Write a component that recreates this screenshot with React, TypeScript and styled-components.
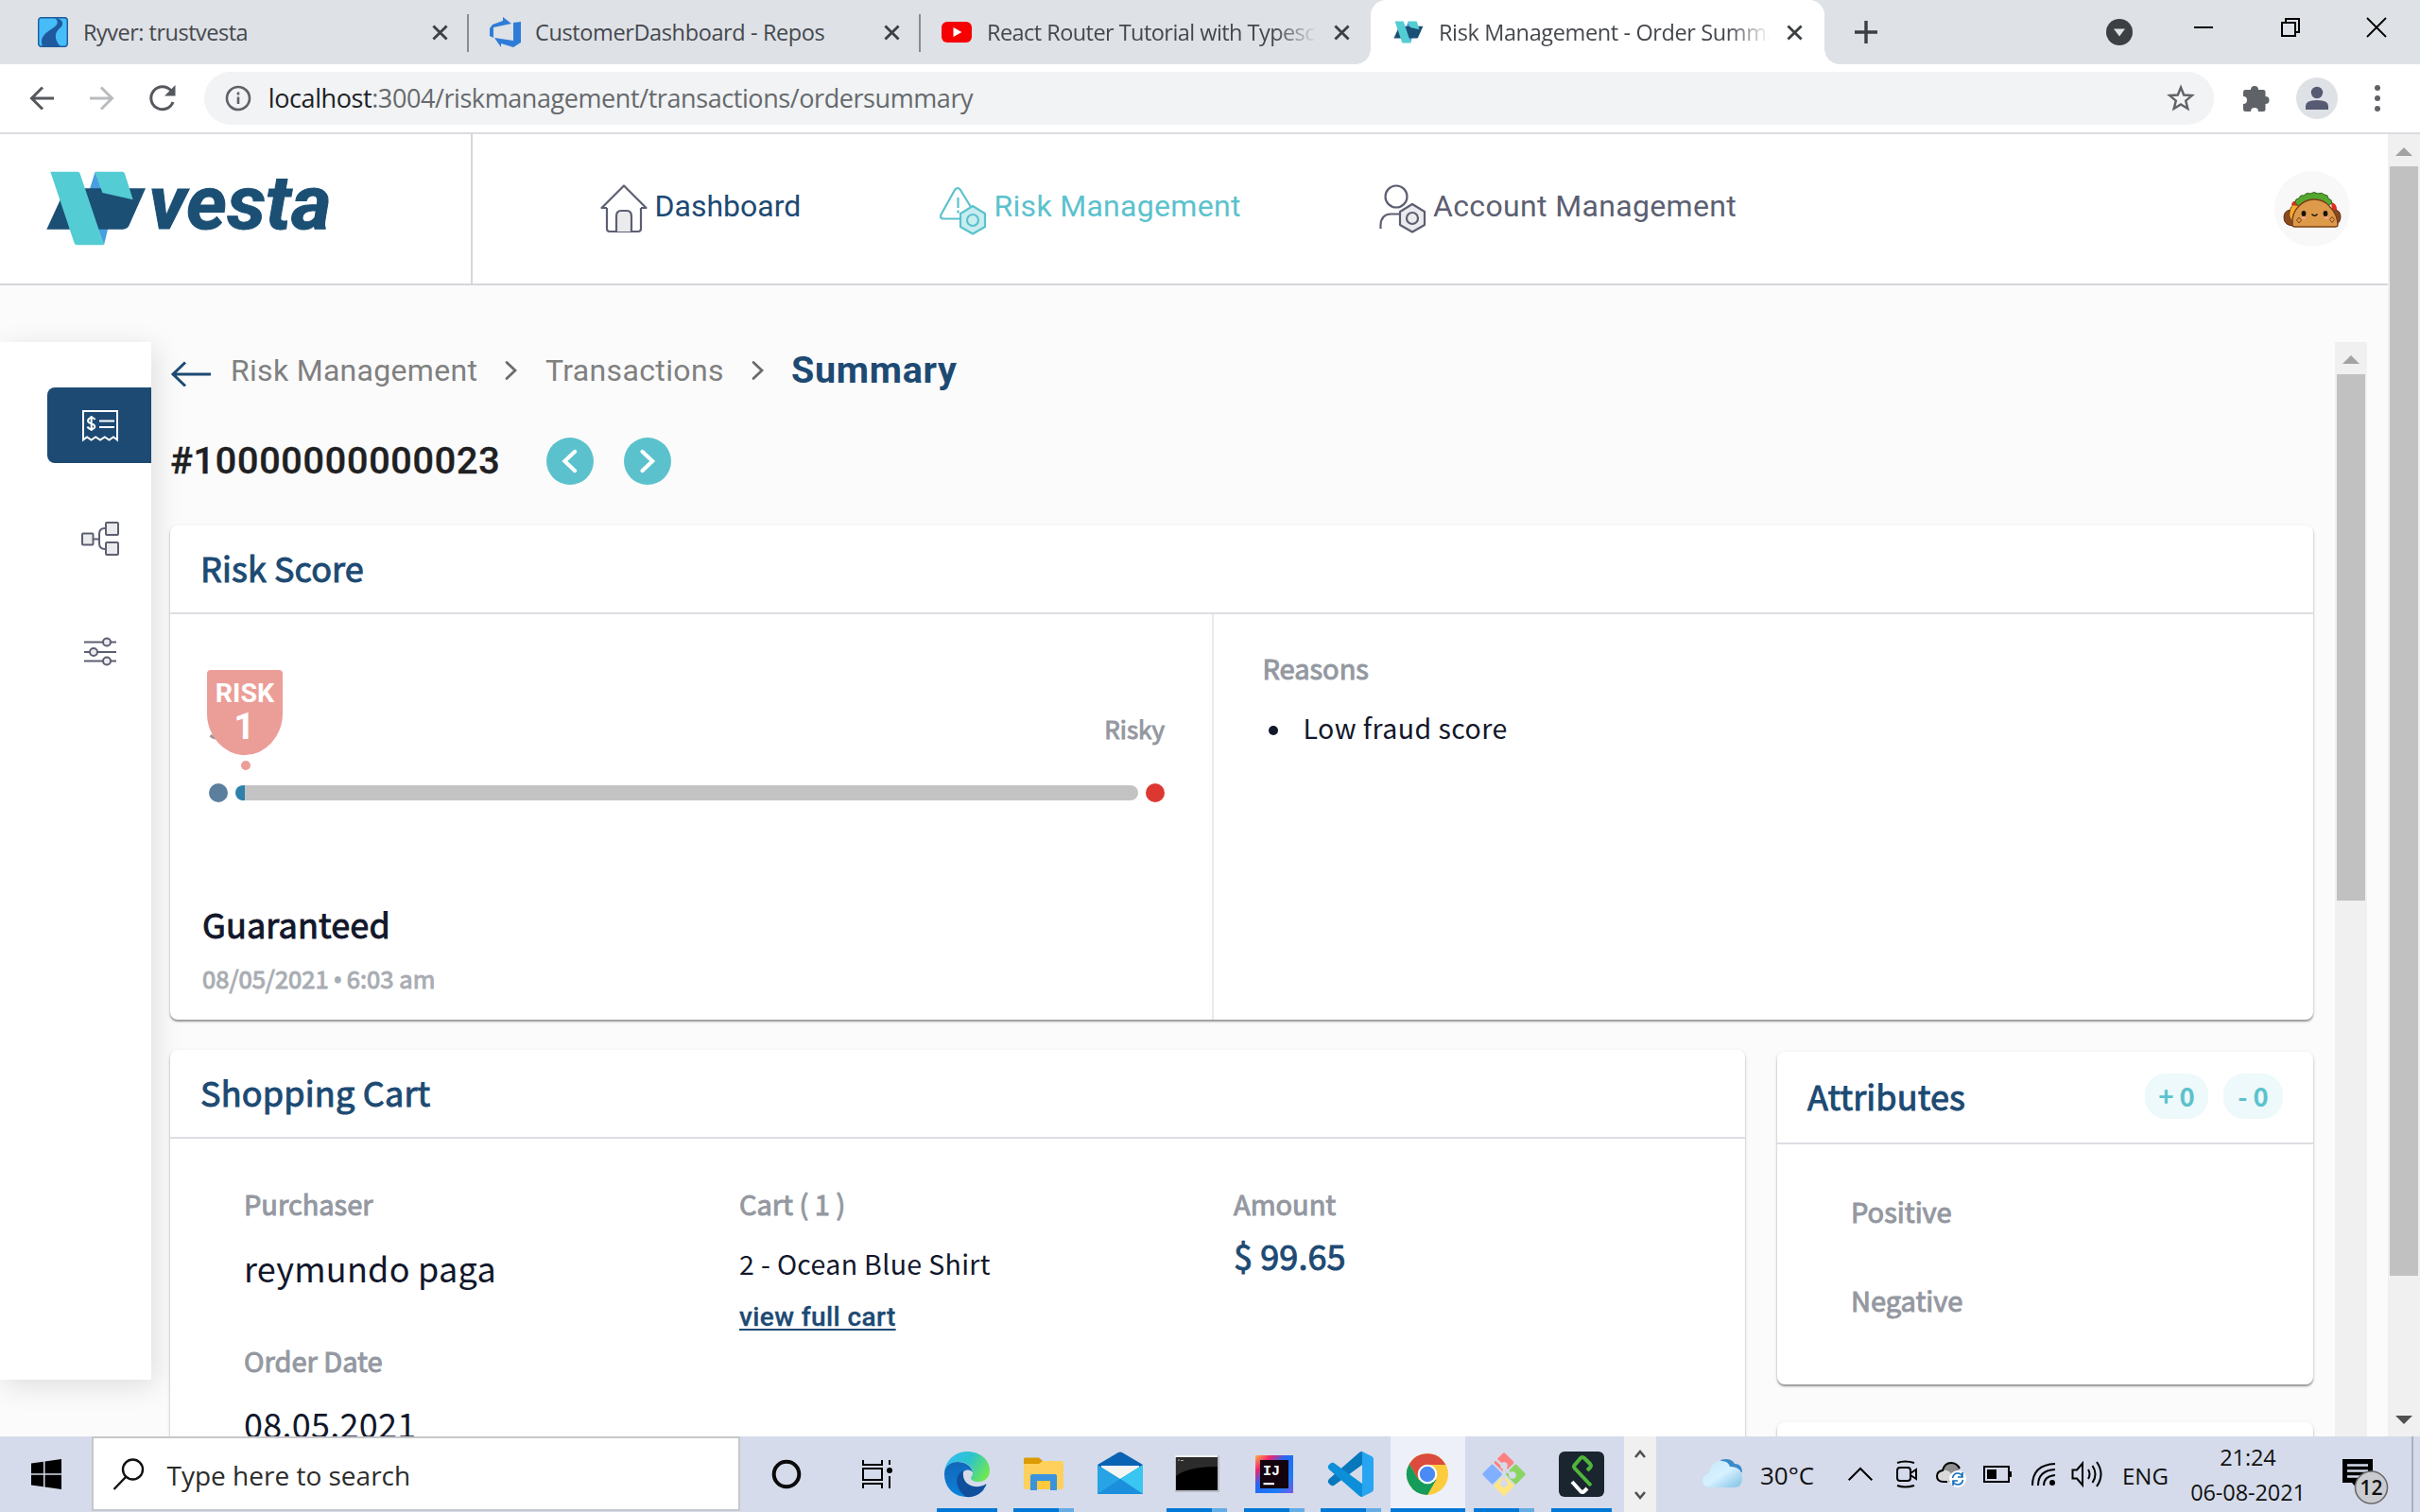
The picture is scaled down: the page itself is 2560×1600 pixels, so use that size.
import React from "react";
import styled, { createGlobalStyle, css } from "styled-components";

const ui = `"Open Sans", "Noto Sans", sans-serif`;
const roboto = `Roboto, sans-serif`;
const source = `"Noto Sans CJK SC", "Noto Sans", sans-serif`;

const navy = "#1d4a73";
const teal = "#5bc2cd";
const slate = "#5c5f72";
const muted = "#9498a1";

const GlobalStyle = createGlobalStyle`
  * { box-sizing: border-box; }
  body { margin: 0; background: #fbfbfb; }
  svg { display: block; flex: none; overflow: visible; }
`;

const Screen = styled.div`
  width: 2560px;
  height: 1600px;
  display: flex;
  flex-direction: column;
  overflow: hidden;
  background: #fbfbfb;
  white-space: nowrap;
`;

/* ---------- browser chrome ---------- */

const TabStrip = styled.div`
  height: 68px;
  flex: none;
  display: flex;
  align-items: stretch;
  padding-left: 18px;
  background: #dee1e6;
  font-family: ${ui};
`;

const Tab = styled.div<{ $w: number; $active?: boolean; $sep?: boolean }>`
  position: relative;
  width: ${(p) => p.$w}px;
  display: flex;
  align-items: center;
  padding: 0 ${(p) => (p.$active ? 23 : 22)}px 0 ${(p) => (p.$active ? 24 : 22)}px;
  ${(p) =>
    p.$sep &&
    css`
      &::after {
        content: "";
        position: absolute;
        right: 0;
        top: 15px;
        width: 2px;
        height: 40px;
        background: #888b90;
      }
    `}
  ${(p) =>
    p.$active &&
    css`
      background: #fff;
      border-radius: 16px 16px 0 0;
      &::before,
      &::after {
        content: "";
        position: absolute;
        bottom: 0;
        width: 16px;
        height: 16px;
      }
      &::before {
        left: -16px;
        background: radial-gradient(circle at 0 0, transparent 15.5px, #fff 16px);
      }
      &::after {
        right: -16px;
        background: radial-gradient(circle at 100% 0, transparent 15.5px, #fff 16px);
      }
    `}
`;

const Favicon = styled.span`
  width: 32px;
  display: flex;
  justify-content: center;
`;

const TabTitle = styled.span<{ $fade?: boolean; $ls: number }>`
  flex: 1;
  min-width: 0;
  margin: 0 18px 0 16px;
  overflow: hidden;
  font-size: 23.5px;
  line-height: 34px;
  color: #45484d;
  letter-spacing: ${(p) => p.$ls}px;
  ${(p) => p.$fade && css`mask-image: linear-gradient(90deg, #000 calc(100% - 44px), transparent);`}
`;

const WindowControls = styled.div`
  margin-left: auto;
  display: flex;
  align-items: center;
`;

const ControlCell = styled.div<{ $w: number; $up?: number }>`
  width: ${(p) => p.$w}px;
  height: 68px;
  display: flex;
  align-items: center;
  justify-content: center;
  padding-bottom: ${(p) => p.$up ?? 0}px;
`;

const NewTab = styled.div`
  width: 88px;
  display: flex;
  align-items: center;
  justify-content: center;
`;

const Toolbar = styled.div`
  height: 74px;
  flex: none;
  display: flex;
  align-items: center;
  background: #fff;
  border-bottom: 2px solid #dadce2;
  padding-left: 12px;
`;

const ToolCell = styled.div<{ $w: number }>`
  width: ${(p) => p.$w}px;
  display: flex;
  justify-content: center;
`;

const AddressBar = styled.div`
  width: 2128px;
  height: 56px;
  margin-left: 12px;
  border-radius: 28px;
  background: #f1f3f4;
  display: flex;
  align-items: center;
  padding: 0 20px 0 22px;
`;

const Url = styled.span`
  flex: 1;
  margin-left: 18px;
  font: 27px/40px ${ui};
  letter-spacing: -0.42px;
  color: #66696d;
  b {
    font-weight: 400;
    color: #202124;
  }
`;

const ProfileDot = styled.div`
  width: 44px;
  height: 44px;
  flex: none;
  border-radius: 50%;
  background: #dee1e6;
  display: flex;
  align-items: center;
  justify-content: center;
`;

/* ---------- page shell ---------- */

const Viewport = styled.div`
  height: 1378px;
  flex: none;
  display: flex;
`;

const Page = styled.div`
  flex: 1;
  min-width: 0;
  display: flex;
  flex-direction: column;
  overflow: hidden;
`;

const Scrollbar = styled.div`
  width: 34px;
  flex: none;
  background: #f0f0f0;
  display: flex;
  flex-direction: column;
  align-items: center;
  padding-top: 14px;
`;

const InnerScrollbar = styled(Scrollbar)`
  height: 1158px;
`;

const Thumb = styled.div<{ $h: number }>`
  width: 30px;
  height: ${(p) => p.$h}px;
  background: #c1c1c1;
`;

const Triangle = styled.div<{ $down?: boolean }>`
  width: 0;
  height: 0;
  border-left: 9px solid transparent;
  border-right: 9px solid transparent;
  ${(p) =>
    p.$down
      ? css`
          border-top: 9px solid #505050;
          margin-top: auto;
          margin-bottom: 13px;
        `
      : css`
          border-bottom: 9px solid #a3a3a3;
          margin-bottom: 11px;
        `}
`;

const Header = styled.header`
  height: 160px;
  flex: none;
  display: flex;
  background: #fff;
  border-bottom: 2px solid #d5d6db;
`;

const LogoArea = styled.div`
  width: 500px;
  padding: 28px 0 0 40px;
  border-right: 2px solid #d5d6db;
`;

const Nav = styled.nav`
  display: flex;
  flex: 1;
  padding-left: 135px;
`;

const NavItem = styled.a<{ $w: number; $color: string; $gap?: number; $ls: number }>`
  width: ${(p) => p.$w}px;
  display: flex;
  align-items: center;
  gap: ${(p) => p.$gap ?? 7.5}px;
  color: ${(p) => p.$color};
  font: 32px/40px ${roboto};
  letter-spacing: ${(p) => p.$ls}px;
  span {
    margin-top: -6px;
  }
`;

const Avatar = styled.div`
  width: 80px;
  height: 80px;
  margin: 39px 40px 0 0;
  border-radius: 50%;
  background: #f8f8f8;
  display: flex;
  align-items: center;
  justify-content: center;
`;

const Body = styled.div`
  flex: 1;
  min-height: 0;
  display: flex;
  align-items: flex-start;
  padding: 60px 22px 0 0;
`;

const Sidebar = styled.aside`
  width: 160px;
  height: 1098px;
  flex: none;
  padding-top: 48px;
  background: #fff;
  box-shadow: 4px 6px 28px rgba(0, 0, 0, 0.12);
  display: flex;
  flex-direction: column;
  align-items: flex-end;
  gap: 40px;
`;

const SideItem = styled.div<{ $active?: boolean }>`
  width: 110px;
  height: 80px;
  border-radius: 8px 0 0 8px;
  background: ${(p) => (p.$active ? navy : "transparent")};
  display: flex;
  align-items: center;
  justify-content: center;
  padding: 0 0 1px 2px;
`;

const Content = styled.main`
  width: 2310px;
  height: 1158px;
  padding-left: 20px;
  overflow: hidden;
`;

const Crumbs = styled.div`
  height: 60px;
  display: flex;
  align-items: center;
  font: 32px/40px ${roboto};
  color: #808080;
`;

const CrumbArrow = styled.span`
  width: 64px;
  padding: 7px 0 0 1px;
`;

const Crumb = styled.span<{ $w: number; $ls: number }>`
  width: ${(p) => p.$w}px;
  letter-spacing: ${(p) => p.$ls}px;
`;

const CrumbSep = styled.span<{ $w: number }>`
  width: ${(p) => p.$w}px;
`;

const CrumbCurrent = styled.span`
  font-size: 39.5px;
  font-weight: 700;
  letter-spacing: 0.7px;
  color: ${navy};
`;

const OrderRow = styled.div`
  height: 60px;
  margin: 36px 0 38px;
  display: flex;
  align-items: center;
`;

const OrderId = styled.h1`
  width: 398px;
  margin: 0;
  font: 500 39.5px/50px ${roboto};
  letter-spacing: 0.75px;
  color: #1f2022;
  -webkit-text-stroke: 0.4px currentColor;
`;

const Pager = styled.button`
  width: 50px;
  height: 50px;
  margin: 0 32px 0 0;
  padding: 0;
  border: 0;
  border-radius: 50%;
  background: ${teal};
  display: flex;
  align-items: center;
  justify-content: center;
`;

/* ---------- cards ---------- */

const Card = styled.section<{ $w: number; $h: number }>`
  width: ${(p) => p.$w}px;
  height: ${(p) => p.$h}px;
  flex: none;
  display: flex;
  flex-direction: column;
  background: #fff;
  border-radius: 8px;
  box-shadow: 0 2px 2px rgba(0, 0, 0, 0.38), 0 1px 5px rgba(0, 0, 0, 0.08);
`;

const CardHeader = styled.div<{ $h?: number }>`
  height: ${(p) => p.$h ?? 94}px;
  flex: none;
  display: flex;
  align-items: center;
  padding: 0 32px 2px 32px;
  border-bottom: 2px solid #dddee3;
`;

const semi = css`
  font-family: ${source};
  -webkit-text-stroke: 1px currentColor;
`;

const CardTitle = styled.h2<{ $ls?: number }>`
  margin: -2px 0 0;
  ${semi}
  font-size: 36px;
  line-height: 50px;
  font-weight: 400;
  letter-spacing: ${(p) => p.$ls ?? 0.1}px;
  color: ${navy};
`;

const RiskBody = styled.div`
  flex: 1;
  display: flex;
`;

const ScorePanel = styled.div`
  position: relative;
  width: 1104px;
  padding: 100px 0 0 33px;
  border-right: 2px solid #e9e9ec;
`;

const ScaleLabels = styled.div`
  width: 1011px;
  height: 40px;
  margin-left: 8px;
  display: flex;
  justify-content: space-between;
  ${semi}
  font-size: 26px;
  line-height: 41px;
  color: ${muted};
`;

const Scale = styled.div`
  width: 1011px;
  height: 20px;
  margin: 39px 0 0 8px;
  display: flex;
  align-items: center;
  gap: 8px;
`;

const ScaleDot = styled.i<{ $color: string }>`
  width: 20px;
  height: 20px;
  border-radius: 50%;
  background: ${(p) => p.$color};
`;

const ScaleTrack = styled.div`
  flex: 1;
  height: 16px;
  border-radius: 8px;
  background: linear-gradient(90deg, #2f80ad 10px, #c3c3c3 10px);
`;

const RiskMarker = styled.div`
  position: absolute;
  left: 39px;
  top: 59px;
  width: 80px;
  display: flex;
  flex-direction: column;
  align-items: center;
`;

const Shield = styled.div`
  width: 80px;
  height: 90px;
  padding-top: 9px;
  border-radius: 4px 4px 40px 40px / 4px 4px 44px 44px;
  background: #eb9e98;
  color: #fff;
  text-align: center;
  font: 700 28.5px/32px ${roboto};
`;

const ShieldScore = styled.div`
  font-size: 39px;
  line-height: 39px;
  padding-right: 1px;
`;

const MarkerDot = styled.i`
  width: 10px;
  height: 10px;
  margin: 6px 0 0 2px;
  border-radius: 50%;
  background: #eb9e98;
`;

const Verdict = styled.div`
  margin: 106px 0 0 1px;
  ${semi}
  font-size: 36px;
  line-height: 44px;
  letter-spacing: 0.15px;
  color: #12172b;
`;

const VerdictDate = styled.div`
  margin: 18px 0 0 1px;
  ${semi}
  font-size: 25.6px;
  line-height: 36px;
  color: #a9adb3;
  i {
    font-family: "Noto Sans", sans-serif;
    font-style: normal;
    margin: 0 -1px;
  }
`;

const ReasonsPanel = styled.div`
  flex: 1;
  padding: 36px 0 0 51.5px;
`;

const Label = styled.div<{ $mt?: number; $ls?: number }>`
  margin-top: ${(p) => p.$mt ?? 0}px;
  ${semi}
  font-size: 29px;
  line-height: 40px;
  letter-spacing: ${(p) => p.$ls ?? 0}px;
  color: ${muted};
`;

const Reason = styled.div`
  margin: 24px 0 0 6px;
  display: flex;
  align-items: center;
  gap: 27px;
  font: 28.5px/40px ${source};
  letter-spacing: 0.45px;
  color: #12172b;
  &::before {
    content: "";
    width: 10px;
    height: 10px;
    margin-top: 5px;
    border-radius: 50%;
    background: #12172b;
  }
`;

const Lower = styled.div`
  display: flex;
  align-items: flex-start;
  gap: 34px;
  margin-top: 32px;
`;

const SideColumn = styled.div`
  display: flex;
  flex-direction: column;
  gap: 40px;
  margin-top: 2px;
`;

const CartGrid = styled.div`
  display: grid;
  grid-template-columns: 524px 523px 1fr;
  padding: 48px 0 0 78px;
`;

const BigValue = styled.div<{ $mt: number; $strong?: boolean }>`
  margin-top: ${(p) => p.$mt}px;
  font: 36px/48px ${source};
  letter-spacing: ${(p) => (p.$strong ? 0.1 : 0.25)}px;
  color: ${(p) => (p.$strong ? navy : "#12172b")};
  ${(p) => p.$strong && css`-webkit-text-stroke: 1px currentColor;`}
`;

const CartLine = styled.div`
  margin-top: 24px;
  font: 28.5px/40px ${source};
  letter-spacing: 0.35px;
  color: #12172b;
`;

const CartLink = styled.a`
  display: block;
  margin-top: 19px;
  font: 500 28px/36px ${roboto};
  letter-spacing: 0.4px;
  color: ${navy};
  -webkit-text-stroke: 0.3px currentColor;
  text-decoration: underline;
  text-decoration-thickness: 2px;
  text-underline-offset: 3px;
`;

const Pills = styled.div`
  margin-left: auto;
  display: flex;
  gap: 16px;
`;

const Pill = styled.span<{ $w: number }>`
  width: ${(p) => p.$w}px;
  height: 48px;
  border-radius: 22px;
  background: #edf9fa;
  color: ${teal};
  text-align: center;
  font: 700 27.5px/47px ${source};
`;

const AttributeBody = styled.div`
  padding: 50px 0 0 78px;
`;

/* ---------- taskbar ---------- */

const Taskbar = styled.footer`
  height: 80px;
  flex: none;
  display: flex;
  background: #d5dbea;
  font-family: ${ui};
  color: #111;
`;

const TaskCell = styled.div<{ $w: number; $left?: number; $size?: number }>`
  width: ${(p) => p.$w}px;
  flex: none;
  display: flex;
  align-items: center;
  justify-content: ${(p) => (p.$left === undefined ? "center" : "flex-start")};
  padding-left: ${(p) => p.$left ?? 0}px;
  padding-top: ${(p) => (p.$size ? 2 : 0)}px;
  font-size: ${(p) => p.$size ?? 26}px;
`;

const SearchBox = styled.div`
  width: 686px;
  height: 79px;
  flex: none;
  border: 2px solid #c6c7ca;
  background: #fff;
  display: flex;
  align-items: center;
  padding-left: 20px;
  gap: 23.5px;
  font-size: 28px;
  color: #2b2b2b;
  span {
    padding-top: 3px;
  }
`;

const Apps = styled.div`
  display: flex;
  gap: 2.25px;
  margin: 0 6px 0 5px;
`;

const AppSlot = styled.div<{ $active?: boolean }>`
  width: 79px;
  height: 80px;
  display: flex;
  flex-direction: column;
  align-items: center;
  padding-top: 16px;
  background: ${(p) => (p.$active ? "#edf0f8" : "transparent")};
`;

const Running = styled.div<{ $kind: "single" | "multi" | "full" }>`
  width: ${(p) => (p.$kind === "full" ? 79 : 64)}px;
  height: 4px;
  margin-top: 12px;
  background: ${(p) =>
    p.$kind === "multi" ? "linear-gradient(90deg, #0078d7 48px, #66ace5 48px)" : "#0078d7"};
`;

const AppScroller = styled.div`
  width: 34px;
  background: #f0f0f0;
  display: flex;
  flex-direction: column;
  align-items: center;
  padding: 14px 0 13px;
  justify-content: space-between;
`;

const Clock = styled.div`
  width: 146px;
  text-align: center;
  font-size: 23.5px;
  line-height: 37px;
  letter-spacing: -0.1px;
  padding-top: 4px;
`;

const ShowDesktop = styled.div`
  margin-left: auto;
  width: 9px;
  border-left: 2px solid #a9afbd;
`;

/* ---------- drawings ---------- */

const CloseX = () => (
  <svg width="17" height="17" viewBox="0 0 18 18" stroke="#3c4043" strokeWidth="3">
    <path d="M1.5 1.5l15 15M16.5 1.5l-15 15" />
  </svg>
);

const VestaShapes = () => (
  <>
    <path d="M182 35L164 92l46 20zM190 214h33l-13 54z" fill="#489fe0" />
    <path d="M88 88H342L290 205Q284 218 270 218H28z" fill="#1b4f74" />
    <path d="M40 35H126Q132 35 134 41L210 268H124Q118 268 116 262z" fill="#54ccd3" />
    <path d="M182 35H268Q274 35 276 41L302 124L205 102z" fill="#54ccd3" />
  </>
);

const VestaLogo = () => (
  <svg width="320" height="100" viewBox="0 0 960 300">
    <VestaShapes />
    <text
      x="352"
      y="216"
      fontFamily="Roboto, sans-serif"
      fontWeight="700"
      fontStyle="italic"
      fontSize="240"
      textLength="580"
      lengthAdjust="spacingAndGlyphs"
      fill="#1b4f74"
      stroke="#1b4f74"
      strokeWidth="3"
    >
      vesta
    </text>
  </svg>
);

const VestaFavicon = () => (
  <svg width="32" height="26" viewBox="24 25 324 254">
    <VestaShapes />
  </svg>
);

const RyverIcon = () => (
  <svg width="32" height="32" viewBox="0 0 32 32">
    <rect x="0.7" y="0.7" width="30.6" height="30.6" rx="3" fill="#46bdf8" stroke="#1f5a9e" strokeWidth="1.4" />
    <path d="M18 1c9 1 11 7 4 12-4 4-5 11 2 18H5C2 23 6 18 14 13c7-4 9-8 4-12z" fill="#1f5a9e" />
  </svg>
);

const AzureIcon = () => (
  <svg width="33" height="32" viewBox="0 0 33 32" fill="#2f7cd8">
    <path d="M0 12L3 8 14 4V0l9 7L4 11v11l-4-2zM25 6l8-1v22l-8 5-13-4v4L5 22l20 3z" />
  </svg>
);

const YoutubeIcon = () => (
  <svg width="32" height="22" viewBox="0 0 32 22">
    <rect width="32" height="22" rx="6" fill="#f60002" />
    <path d="M12.5 6l9 5-9 5z" fill="#fff" />
  </svg>
);

const House = () => (
  <svg width="50" height="52" viewBox="0 0 50 52" fill="none" stroke={slate} strokeWidth="2.2" strokeLinejoin="round">
    <path d="M7 25v22q0 3 3 3h30q3 0 3-3V25" />
    <path d="M1 25L25 1l24 24z" fill="#fff" stroke="none" />
    <path d="M7 25H1.500L25 1.500 48.500 25H43" />
    <path d="M17 50V34q0-6 5-6h6q5 0 5 6v16" fill="#ebebed" />
  </svg>
);

const RiskIcon = () => (
  <svg width="50" height="46" viewBox="0 0 50 46" fill="none" stroke={teal} strokeWidth="2.2" strokeLinejoin="round">
    <path d="M22 33.500H4Q0 33.500 1.500 29L16 3q3-4 6 0l11 18" />
    <path d="M19.500 11v11M19.500 24.500v3" />
    <path d="M35 20l13 8v14l-13 7.500L22 42V28z" fill="#c9edf0" />
    <circle cx="35" cy="35" r="6" />
  </svg>
);

const AccountIcon = () => (
  <svg width="50" height="52" viewBox="0 0 50 52" fill="none" stroke={slate} strokeWidth="2.2" strokeLinejoin="round">
    <circle cx="18" cy="13" r="11.500" />
    <path d="M1.500 47V43Q2 32 12 31.500H22" />
    <path d="M35 21l13 8v14l-13 7.500L22 43V29z" fill="#ebebed" />
    <circle cx="35" cy="36" r="6" />
  </svg>
);

const Taco = () => (
  <svg width="64" height="42" viewBox="0 0 64 42">
    <path d="M3 27q-2 9 5 12h48q7-3 6-11-1-7-5-8-2-11-14-15-9-4-19 0Q13 8 10 20q-6 0-7 7z" fill="#fff" stroke="#eee" />
    <path d="M2 30q0-7 7-8l4 17q-11 0-11-9zM55 22q7 0 7 8 0 5-5 8z" fill="#8a4a1f" stroke="#5e2f12" />
    <path d="M8 25q1-8 6-9l5 2-8 16q-4-3-3-9z" fill="#f6ae2e" stroke="#7b3f16" />
    <path d="M10 17q1-5 5-4l2 5zM52 14q6 1 6 8l-5 1z" fill="#dd2e1b" />
    <path d="M14 14q0-4 4-4 1-4 5-3 3-4 7-2 4-3 8 0 4-2 7 1 4 0 4 4 4 1 4 5l-6 4-17-6-12 6z" fill="#55a630" stroke="#2f6d1b" />
    <path d="M11 38q-1-12 6-19 7-8 17-8t16 7q9 9 9 20 0 2-3 2H14q-3 0-3-2z" fill="#dd9a4b" stroke="#7b3f16" strokeWidth="1.400" />
    <ellipse cx="23" cy="26" rx="2.400" ry="3" fill="#18110c" />
    <ellipse cx="46" cy="26" rx="2.400" ry="3" fill="#18110c" />
    <path d="M31.500 26.500q3 3.500 6 0" fill="none" stroke="#18110c" strokeWidth="1.400" />
    <path d="M21 30.500h4M45 30.500h4" stroke="#f4a3a3" strokeWidth="2" />
    <path d="M18 30l2.500 3-2.500 3-2.500-3zM53 29.500l2.500 3-2.500 3-2.500-3z" fill="none" stroke="#7b3f16" />
  </svg>
);

const Receipt = () => (
  <svg width="40" height="34" viewBox="0 0 40 34" fill="none" stroke="#fff" strokeWidth="2">
    <path d="M2 32.500V2h36v30.500l-4-3-4.500 3-4.700-3-4.800 3-4.800-3-4.700 3-4.500-3z" />
    <path d="M19 12.500h16M19 19h16" />
    <path d="M14.500 11q-1-2-3.700-2T7 12q0 2.300 3.500 3.200T14.300 18.500Q14 21 10.800 21T6.500 18.500M10.700 7v16" />
  </svg>
);

const TreeIcon = () => (
  <svg width="40" height="36" viewBox="0 0 40 36" fill="#ebebed" stroke={slate} strokeWidth="2" strokeLinejoin="round">
    <path d="M13 18.500h6M26 7h-1q-6 0-6 6v10q0 6 6 6h1" fill="none" />
    <rect x="1" y="12.500" width="11.500" height="12" rx="1" />
    <rect x="26" y="1" width="13" height="13" rx="1" />
    <rect x="26" y="22" width="13" height="13" rx="1" />
  </svg>
);

const Sliders = () => (
  <svg width="34" height="32" viewBox="0 0 34 32" fill="#ebebed" stroke={slate} strokeWidth="2">
    <path d="M0 5.500h34M0 16h34M0 25.500h34" />
    <circle cx="24" cy="5.500" r="4" />
    <circle cx="10" cy="16" r="4" />
    <circle cx="24" cy="25.500" r="4" />
  </svg>
);

const BackArrow = () => (
  <svg width="43" height="28" viewBox="0 0 43 28" fill="none" stroke={navy} strokeWidth="3">
    <path d="M42 14H2.500M15 1.500L2 14l13 12.500" />
  </svg>
);

const Chevron = ({ size = 20, color = "#6b6b6b", left = false, width = 2.8 }: { size?: number; color?: string; left?: boolean; width?: number }) => (
  <svg width={size * 0.64} height={size} viewBox="0 0 12.800 20" fill="none" stroke={color} strokeWidth={width} strokeLinecap="round">
    <path d={left ? "M11 1.500L2 10l9 8.500" : "M2 1.500L11 10 2 18.500"} />
  </svg>
);

const Edge = () => (
  <svg width="48" height="48" viewBox="0 0 48 48">
    <defs>
      <linearGradient id="edgeTop" x1="0" y1="0.2" x2="1" y2="0.6">
        <stop offset="0" stopColor="#36bdf2" />
        <stop offset="0.5" stopColor="#2cc3cf" />
        <stop offset="1" stopColor="#6ee851" />
      </linearGradient>
      <linearGradient id="edgeLeft" x1="0.3" y1="0" x2="0.4" y2="1">
        <stop offset="0" stopColor="#1268b8" />
        <stop offset="1" stopColor="#0b82dc" />
      </linearGradient>
    </defs>
    <path d="M0 21C2 8 12 0 24 0c14 0 24 9 24 20 0 8-6 12-12 12-5 0-8-2-8-4 0-1 2-2 2-6 0-6-8-12-17-11C6 12 2 16 0 21z" fill="url(#edgeTop)" />
    <path d="M0 24C0 15 7 11 14 11c9 0 15 5 16 11-2-3-6-3-8-2-5 3-7 13 0 19 7 5 14 3 20 1-5 6-11 8-18 8C10 48 0 38 0 24z" fill="url(#edgeLeft)" />
    <path d="M20 20c-9 4-10 19 3 28 9 1 17-4 21-12 1-1 0-2-1-1-9 5-22 1-23-9-.3-3 0-4 0-6z" fill="#0f4f9c" />
  </svg>
);

const Explorer = () => (
  <svg width="48" height="48" viewBox="0 0 48 48">
    <path d="M3 8q0-1.500 1.500-1.500H19l4 3.500-3 6H3z" fill="#dc9a04" />
    <path d="M3 13h16l4-3h20q2 0 2 2v26q0 2-2 2H5q-2 0-2-2z" fill="#ffd05c" />
    <path d="M10 26q0-2 2-2h24q2 0 2 2v15h-7V31H17v10h-7z" fill="#3a93dc" />
    <path d="M17 31h14v9H17z" fill="#ffc83d" />
  </svg>
);

const Mail = () => (
  <svg width="48" height="48" viewBox="0 0 48 48">
    <path d="M0 14L22 1q2-1 4 0l22 13v6H0z" fill="#0a62b4" />
    <path d="M4 15h40v8L24 36 4 23z" fill="#f5f5f5" />
    <path d="M0 14l24 15L48 14v31H0z" fill="#27a3e6" />
    <path d="M24 29L48 14v31z" fill="#39c6f1" />
    <path d="M0 45l24-16 24 16z" fill="#1b8fdc" />
  </svg>
);

const Cmd = () => (
  <svg width="48" height="48" viewBox="0 0 48 48">
    <rect x="1" y="4" width="47" height="39" fill="#b9bcc6" />
    <rect x="1" y="4" width="45" height="2" fill="#f2f2f2" />
    <rect x="2" y="6" width="44" height="35" fill="#000" />
    <path d="M2 6h44v10C28 16 12 18 2 26z" fill="#2c2c2c" />
    <path d="M4 9h2M7 9.500h3" stroke="#aaa" />
  </svg>
);

const IntelliJ = () => (
  <svg width="48" height="48" viewBox="0 0 48 48">
    <defs>
      <linearGradient id="ijFrame" x1="0" y1="0" x2="1" y2="1">
        <stop offset="0" stopColor="#fdb24a" />
        <stop offset="0.22" stopColor="#f0246c" />
        <stop offset="0.42" stopColor="#2468f5" />
        <stop offset="0.75" stopColor="#1b7cf5" />
        <stop offset="1" stopColor="#7a58e8" />
      </linearGradient>
    </defs>
    <rect x="4" y="4" width="40" height="40" fill="url(#ijFrame)" />
    <rect x="9" y="9" width="30" height="30" fill="#14040f" />
    <text x="12" y="24.500" fontFamily="Liberation Mono, monospace" fontWeight="700" fontSize="15" fill="#fff">IJ</text>
    <rect x="12.500" y="33" width="11.500" height="2.200" fill="#fff" />
  </svg>
);

const VsCode = () => (
  <svg width="48" height="48" viewBox="0 0 48 48">
    <path d="M36 0v14L6 36q-2 1-4-1l-2-2q-1-2 1-4L33 1q1-1 3-1z" fill="#0878bd" />
    <path d="M36 48V34L6 12q-2-1-4 1l-2 2q-1 2 1 4l32 28q1 1 3 1z" fill="#0c8fd8" />
    <path d="M36 0l10 5q2 1 2 3v32q0 2-2 3l-10 5z" fill="#27a5f1" />
  </svg>
);

const Chrome = () => (
  <svg width="48" height="48" viewBox="0 0 48 48">
    <circle cx="24" cy="24" r="22" fill="#fccc3c" />
    <path d="M4.900 13A22 22 0 0 0 24 46L33.500 29.500 24 33l-9.500-3.500z" fill="#169c5a" />
    <path d="M4.900 13A22 22 0 0 1 43.300 14H24L14.500 29.500z" fill="#db4b3e" />
    <circle cx="24" cy="24" r="10.300" fill="#fff" />
    <circle cx="24" cy="24" r="8.200" fill="#4a8af4" />
  </svg>
);

const GitIcon = () => (
  <svg width="48" height="48" viewBox="0 0 48 48">
    <g transform="rotate(45 24 24)">
      <rect x="7.500" y="7.500" width="15.500" height="15.500" rx="1.500" fill="#ff8080" />
      <rect x="25" y="7.500" width="15.500" height="15.500" rx="1.500" fill="#8cd460" />
      <rect x="7.500" y="25" width="15.500" height="15.500" rx="1.500" fill="#80b0ff" />
      <rect x="25" y="25" width="15.500" height="15.500" rx="1.500" fill="#ffe680" />
    </g>
    <g stroke="#d5dbea" strokeWidth="2.600" fill="#d5dbea">
      <path d="M15 8l9 8v18M24 17l8 8" fill="none" />
      <circle cx="24" cy="15" r="2.500" />
      <circle cx="33" cy="25" r="2.500" />
      <circle cx="24" cy="34" r="2.500" />
    </g>
  </svg>
);

const SIcon = () => (
  <svg width="48" height="48" viewBox="0 0 48 48" fill="none" strokeWidth="4" strokeLinejoin="round">
    <rect width="48" height="48" rx="6" fill="#1a252f" />
    <path d="M34 36L17 18q-2-2 0-4l6-7q2-2 4 0l6 6q2 2 0 4l-3 3" stroke="#4fb53c" />
    <path d="M14 32l9 10q2 2 4 0l3-3" stroke="#fff" />
  </svg>
);

const CloudWeather = () => (
  <svg width="44" height="32" viewBox="0 0 44 32">
    <defs>
      <linearGradient id="cloud" x1="0" y1="0" x2="1" y2="1">
        <stop offset="0" stopColor="#c3e9fc" />
        <stop offset="0.5" stopColor="#d6f1ff" />
        <stop offset="1" stopColor="#7fc0e6" />
      </linearGradient>
    </defs>
    <path d="M20 1q11-3 15 4 8 0 8 9L30 15z" fill="#3c8acb" />
    <path d="M10 30q-9 0-9-7 0-6 7-8Q9 4 19 2q9-1 11 6 13 0 13 12 0 10-9 10z" fill="url(#cloud)" />
  </svg>
);

const Puzzle = () => (
  <svg width="30" height="30" viewBox="0 0 30 30" fill="#5f6368">
    <path d="M9 6a4 4 0 0 1 8 0h5q2.500 0 2.500 2.500V13a4 4 0 0 1 0 8v5.500q0 2.500-2.500 2.500h-5a4 4 0 0 0-8 0H3.500Q1 29 1 26.500V21a4 4 0 0 0 0-8V8.500Q1 6 3.500 6z" />
  </svg>
);

const apps: { icon: React.FC; run?: "single" | "multi" | "full" }[] = [
  { icon: Edge, run: "single" },
  { icon: Explorer, run: "multi" },
  { icon: Mail },
  { icon: Cmd, run: "multi" },
  { icon: IntelliJ, run: "multi" },
  { icon: VsCode, run: "multi" },
  { icon: Chrome, run: "full" },
  { icon: GitIcon, run: "multi" },
  { icon: SIcon, run: "single" },
];

const BrowserChrome = () => (
  <>
    <TabStrip>
      <Tab $w={478} $sep>
        <Favicon><RyverIcon /></Favicon>
        <TabTitle $ls={-0.5}>Ryver: trustvesta</TabTitle>
        <CloseX />
      </Tab>
      <Tab $w={478} $sep>
        <Favicon><AzureIcon /></Favicon>
        <TabTitle $ls={-0.38}>CustomerDashboard - Repos</TabTitle>
        <CloseX />
      </Tab>
      <Tab $w={476}>
        <Favicon><YoutubeIcon /></Favicon>
        <TabTitle $fade $ls={-0.55}>React Router Tutorial with Typescript</TabTitle>
        <CloseX />
      </Tab>
      <Tab $w={480} $active>
        <Favicon><VestaFavicon /></Favicon>
        <TabTitle $fade $ls={-0.38}>Risk Management - Order Summary</TabTitle>
        <CloseX />
      </Tab>
      <NewTab>
        <svg width="24" height="24" viewBox="0 0 24 24" stroke="#3c4043" strokeWidth="3.400">
          <path d="M12 0v24M0 12h24" />
        </svg>
      </NewTab>
      <WindowControls>
        <ControlCell $w={86}>
          <svg width="28" height="28" viewBox="0 0 28 28">
            <circle cx="14" cy="14" r="14" fill="#3c4043" />
            <path d="M8 10.500h12l-6 8z" fill="#dee1e6" />
          </svg>
        </ControlCell>
        <ControlCell $w={92} $up={10}>
          <svg width="20" height="20" viewBox="0 0 20 20" stroke="#000" strokeWidth="2"><path d="M0 10h20" /></svg>
        </ControlCell>
        <ControlCell $w={91} $up={10}>
          <svg width="20" height="20" viewBox="0 0 20 20" stroke="#000" strokeWidth="2" fill="none">
            <path d="M1 5h14v14H1zM5 5V1h14v14h-4" />
          </svg>
        </ControlCell>
        <ControlCell $w={92} $up={10}>
          <svg width="20" height="20" viewBox="0 0 20 20" stroke="#000" strokeWidth="1.800"><path d="M0 0l20 20M20 0L0 20" /></svg>
        </ControlCell>
      </WindowControls>
    </TabStrip>
    <Toolbar>
      <ToolCell $w={64}>
        <svg width="26" height="26" viewBox="0 0 26 26" fill="none" stroke="#55585d" strokeWidth="3"><path d="M26 13H2M14 1.500L2.500 13 14 24.500" /></svg>
      </ToolCell>
      <ToolCell $w={64}>
        <svg width="26" height="26" viewBox="0 0 26 26" fill="none" stroke="#b9bbbe" strokeWidth="3"><path d="M0 13h24M12 1.500L23.500 13 12 24.500" /></svg>
      </ToolCell>
      <ToolCell $w={64}>
        <svg width="28" height="28" viewBox="0 0 28 28" fill="none" stroke="#55585d" strokeWidth="3">
          <path d="M25 18A12 12 0 1 1 23 6" />
          <path d="M27.500 0v11.500H16z" fill="#55585d" stroke="none" />
        </svg>
      </ToolCell>
      <AddressBar>
        <svg width="28" height="28" viewBox="0 0 28 28" fill="none" stroke="#5f6368" strokeWidth="2.600">
          <circle cx="14" cy="14" r="12" />
          <path d="M14 12.500V20M14 7.500v3" />
        </svg>
        <Url><b>localhost</b>:3004/riskmanagement/transactions/ordersummary</Url>
        <svg width="30" height="30" viewBox="0 0 30 30" fill="none" stroke="#5f6368" strokeWidth="2.400">
          <path d="M15 3.500l3.200 8 8.600.6-6.600 5.500 2.100 8.400L15 21.400 7.700 26l2.100-8.400-6.600-5.500 8.600-.6z" />
        </svg>
      </AddressBar>
      <ToolCell $w={90}><Puzzle /></ToolCell>
      <ToolCell $w={38}>
        <ProfileDot>
          <svg width="26" height="26" viewBox="0 0 26 26" fill="#565b73">
            <circle cx="13" cy="7" r="6.200" />
            <path d="M1 25v-4q0-6 12-6t12 6v4z" />
          </svg>
        </ProfileDot>
      </ToolCell>
      <ToolCell $w={90}>
        <svg width="6" height="28" viewBox="0 0 6 28" fill="#5f6368">
          <circle cx="3" cy="3" r="3" /><circle cx="3" cy="14" r="3" /><circle cx="3" cy="25" r="3" />
        </svg>
      </ToolCell>
    </Toolbar>
  </>
);

const RiskCard = () => (
  <Card $w={2267} $h={523}>
    <CardHeader><CardTitle>Risk Score</CardTitle></CardHeader>
    <RiskBody>
      <ScorePanel>
        <ScaleLabels><span>Safe</span><span>Risky</span></ScaleLabels>
        <Scale>
          <ScaleDot $color="#5c7f9e" />
          <ScaleTrack />
          <ScaleDot $color="#dc3831" />
        </Scale>
        <Verdict>Guaranteed</Verdict>
        <VerdictDate>08/05/2021 <i>•</i> 6:03 am</VerdictDate>
        <RiskMarker>
          <Shield>RISK<ShieldScore>1</ShieldScore></Shield>
          <MarkerDot />
        </RiskMarker>
      </ScorePanel>
      <ReasonsPanel>
        <Label>Reasons</Label>
        <Reason>Low fraud score</Reason>
      </ReasonsPanel>
    </RiskBody>
  </Card>
);

const CartCard = () => (
  <Card $w={1666} $h={600}>
    <CardHeader><CardTitle $ls={0.2}>Shopping Cart</CardTitle></CardHeader>
    <CartGrid>
      <div>
        <Label>Purchaser</Label>
        <BigValue $mt={24}>reymundo paga</BigValue>
        <Label $mt={54}>Order Date</Label>
        <BigValue $mt={23}>08.05.2021</BigValue>
      </div>
      <div>
        <Label>Cart ( 1 )</Label>
        <CartLine>2 - Ocean Blue Shirt</CartLine>
        <CartLink>view full cart</CartLink>
      </div>
      <div>
        <Label>Amount</Label>
        <BigValue $mt={11} $strong>$ 99.65</BigValue>
      </div>
    </CartGrid>
  </Card>
);

const AttributesCard = () => (
  <Card $w={567} $h={352}>
    <CardHeader $h={98}>
      <CardTitle $ls={0.15}>Attributes</CardTitle>
      <Pills><Pill $w={67}>+ 0</Pill><Pill $w={63}>- 0</Pill></Pills>
    </CardHeader>
    <AttributeBody>
      <Label>Positive</Label>
      <Label $mt={54}>Negative</Label>
    </AttributeBody>
  </Card>
);

const WindowsTaskbar = () => (
  <Taskbar>
    <TaskCell $w={97}>
      <svg width="32" height="32" viewBox="0 0 32 32"><path d="M0 4.500L13 2.700v12.600H0zM14.500 2.500L32 0v15.300H14.500zM0 16.700h13v12.600L0 27.500zM14.500 16.700H32V32l-17.500-2.500z" /></svg>
    </TaskCell>
    <SearchBox>
      <svg width="34" height="34" viewBox="0 0 34 34" fill="none" stroke="#111" strokeWidth="2.400"><circle cx="21.500" cy="12" r="10.500" /><path d="M14 20L1.500 33" /></svg>
      <span>Type here to search</span>
    </SearchBox>
    <TaskCell $w={97}>
      <svg width="32" height="32" viewBox="0 0 32 32"><circle cx="16" cy="16" r="13.300" fill="none" stroke="#0a0a0a" strokeWidth="4" /></svg>
    </TaskCell>
    <TaskCell $w={98} $left={32}>
      <svg width="32" height="30" viewBox="0 0 32 30" fill="none" stroke="#000" strokeWidth="2">
        <path d="M1 0v5h20V0M1 9h20v12H1zM1 30v-5h20v5M29 0v5M29 17v13" />
        <circle cx="29" cy="11" r="3" fill="#000" stroke="none" />
      </svg>
    </TaskCell>
    <Apps>
      {apps.map(({ icon: Icon, run }, i) => (
        <AppSlot key={i} $active={run === "full"}>
          <Icon />
          {run && <Running $kind={run} />}
        </AppSlot>
      ))}
    </Apps>
    <AppScroller>
      <svg width="12" height="9" viewBox="0 0 12 9" fill="none" stroke="#505050" strokeWidth="2.600"><path d="M1 8l5-6 5 6" /></svg>
      <svg width="12" height="9" viewBox="0 0 12 9" fill="none" stroke="#505050" strokeWidth="2.600"><path d="M1 1l5 6 5-6" /></svg>
    </AppScroller>
    <TaskCell $w={110} $left={48}><CloudWeather /></TaskCell>
    <TaskCell $w={81} $left={0} $size={26}>30°C</TaskCell>
    <TaskCell $w={50}>
      <svg width="26" height="14" viewBox="0 0 26 14" fill="none" stroke="#000" strokeWidth="2"><path d="M.7 13.300L13 1l12.300 12.300" /></svg>
    </TaskCell>
    <TaskCell $w={48}>
      <svg width="24" height="30" viewBox="0 0 24 30" fill="none" stroke="#000" strokeWidth="2">
        <rect x="2" y="8" width="14" height="14" rx="3" />
        <path d="M16 14l6-4v10l-6-4M2 3q8-3 18 0M2 27q8 3 18 0" />
      </svg>
    </TaskCell>
    <TaskCell $w={46}>
      <svg width="32" height="28" viewBox="0 0 32 28">
        <path d="M8 22q-7 0-7-6 0-5 6-6Q9 2 16 2q6 0 9 6l-8 14z" fill="#8e8e8e" />
        <path d="M8 22q-7 0-7-6 0-5 6-6 7-1 10 5l-4 7z" fill="#d9d9d9" />
        <path d="M12 22H8q-7 0-7-6 0-5 6-6Q9 2 16 2q6 0 9 6" fill="none" stroke="#000" strokeWidth="2" />
        <circle cx="23" cy="19" r="9" fill="#fff" />
        <path d="M17.500 18q1-5 5.500-5 3.500 0 5 3.500M28.500 20q-1 5-5.500 5-3.500 0-5-3.500M28 12v5h-5M18 26v-5h5" fill="none" stroke="#0f6cbd" strokeWidth="1.600" />
      </svg>
    </TaskCell>
    <TaskCell $w={52}>
      <svg width="30" height="18" viewBox="0 0 30 18"><path d="M1 1h26v16H1z" fill="none" stroke="#000" strokeWidth="2" /><path d="M4 4h10v10H4zM28 6h2v6h-2z" /></svg>
    </TaskCell>
    <TaskCell $w={46}>
      <svg width="26" height="26" viewBox="0 0 26 26" fill="none" stroke="#000" strokeWidth="2">
        <path d="M1 25Q1 3 25 2M7 25Q7 9 25 8M13 25q0-10 12-11" />
        <circle cx="22" cy="22" r="3" fill="#000" stroke="none" />
      </svg>
    </TaskCell>
    <TaskCell $w={46}>
      <svg width="34" height="30" viewBox="0 0 34 30" fill="none" stroke="#000" strokeWidth="2">
        <path d="M1.500 10.500H6l6-7v23l-6-7H1.500zM18 10q3 5 0 10M22.500 6q6 9 0 18M27 2q9 13 0 26" />
      </svg>
    </TaskCell>
    <TaskCell $w={74} $left={14} $size={24}>ENG</TaskCell>
    <Clock>21:24<br />06-08-2021</Clock>
    <TaskCell $w={100}>
      <svg width="52" height="60" viewBox="0 0 52 60">
        <path d="M3 14h32v25H19v7l-6-7H3z" />
        <path d="M8 20.500h22M8 26.500h22M8 32.500h16" stroke="#d5dbea" strokeWidth="2.400" />
        <circle cx="33.500" cy="44" r="17" fill="#c9cbd0" stroke="#6b6b6b" strokeWidth="1.600" />
        <text x="33.500" y="51.500" textAnchor="middle" fontFamily="Open Sans, sans-serif" fontWeight="600" fontSize="21" fill="#111">12</text>
      </svg>
    </TaskCell>
    <ShowDesktop />
  </Taskbar>
);

export default function App() {
  return (
    <Screen>
      <GlobalStyle />
      <BrowserChrome />
      <Viewport>
        <Page>
          <Header>
            <LogoArea><VestaLogo /></LogoArea>
            <Nav>
              <NavItem $w={359} $color={navy} $ls={0}><House /><span>Dashboard</span></NavItem>
              <NavItem $w={465} $color={teal} $ls={0.3}><RiskIcon /><span>Risk Management</span></NavItem>
              <NavItem $w={400} $color={slate} $ls={0.35} $gap={7}><AccountIcon /><span>Account Management</span></NavItem>
            </Nav>
            <Avatar><Taco /></Avatar>
          </Header>
          <Body>
            <Sidebar>
              <SideItem $active><Receipt /></SideItem>
              <SideItem><TreeIcon /></SideItem>
              <SideItem><Sliders /></SideItem>
            </Sidebar>
            <Content>
              <Crumbs>
                <CrumbArrow><BackArrow /></CrumbArrow>
                <Crumb $w={290} $ls={0.3}>Risk Management</Crumb>
                <CrumbSep $w={43}><Chevron /></CrumbSep>
                <Crumb $w={218} $ls={0.35}>Transactions</Crumb>
                <CrumbSep $w={42}><Chevron /></CrumbSep>
                <CrumbCurrent>Summary</CrumbCurrent>
              </Crumbs>
              <OrderRow>
                <OrderId>#10000000000023</OrderId>
                <Pager><Chevron left size={24} color="#fff" width={3.4} /></Pager>
                <Pager><Chevron size={24} color="#fff" width={3.4} /></Pager>
              </OrderRow>
              <RiskCard />
              <Lower>
                <CartCard />
                <SideColumn>
                  <AttributesCard />
                  <Card $w={567} $h={200} />
                </SideColumn>
              </Lower>
            </Content>
            <InnerScrollbar>
              <Triangle />
              <Thumb $h={557} />
            </InnerScrollbar>
          </Body>
        </Page>
        <Scrollbar>
          <Triangle />
          <Thumb $h={1174} />
          <Triangle $down />
        </Scrollbar>
      </Viewport>
      <WindowsTaskbar />
    </Screen>
  );
}
